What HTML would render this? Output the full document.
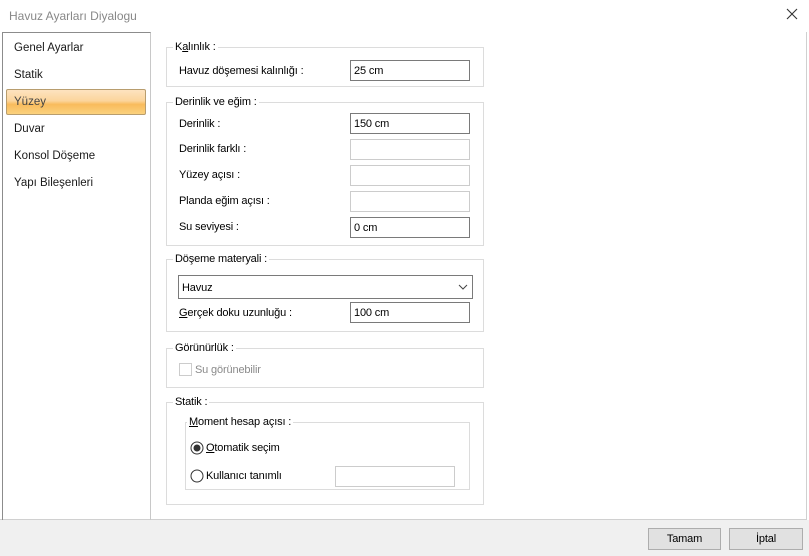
<!DOCTYPE html><html><head><meta charset="utf-8"><style>
*{margin:0;padding:0;box-sizing:border-box}
body{width:809px;height:556px;background:#fff;font-family:"Liberation Sans",sans-serif;font-size:11px;letter-spacing:-0.15px;color:#000;position:relative;overflow:hidden}
.a{position:absolute}
.t{position:absolute;white-space:nowrap;line-height:14px}
.g{position:absolute;border:1px solid #dcdcdc}
.lg{position:absolute;background:#fff;padding:0 2px;white-space:nowrap;line-height:14px}
.in{position:absolute;border:1px solid #7a7a7a;background:#fff;height:21px;padding:3px 0 0 3px;line-height:14px}
.dis{border-color:#cccccc}
.li{position:absolute;left:14px;font-size:11.5px;letter-spacing:0;color:#1a1a1a}
.btn{position:absolute;top:528px;height:22px;background:#e1e1e1;border:1px solid #adadad;text-align:center;line-height:20px}
</style></head><body>
<div class="t" style="left:9px;top:9px;font-size:12px;color:#888;letter-spacing:0">Havuz Ayarları Diyalogu</div>
<svg class="a" style="left:786px;top:8px" width="12" height="12"><path d="M1 1L11 11M11 1L1 11" stroke="#333" stroke-width="1.1"/></svg>
<div class="a" style="left:0;top:520px;width:809px;height:36px;background:#f0f0f0"></div>
<div class="a" style="left:0;top:519px;width:807px;height:1px;background:#d0d0d0"></div>
<div class="a" style="left:806px;top:32px;width:1px;height:488px;background:#d0d0d0"></div>
<div class="a" style="left:2px;top:32px;width:149px;height:488px;border:1px solid #8c8c8c;border-right-color:#c8c8c8;border-bottom:none"></div>
<div class="a" style="left:6px;top:89px;width:140px;height:26px;border:1px solid #b89d6e;border-radius:2px;background:linear-gradient(#fde3c0 0%,#fcd59c 45%,#f9bb5c 60%,#fbd27e 100%)"></div>
<div class="li t" style="top:41px">Genel Ayarlar</div>
<div class="li t" style="top:68px">Statik</div>
<div class="li t" style="top:95px;color:#444">Yüzey</div>
<div class="li t" style="top:122px">Duvar</div>
<div class="li t" style="top:149px">Konsol Döşeme</div>
<div class="li t" style="top:176px">Yapı Bileşenleri</div>

<div class="g" style="left:166px;top:47px;width:318px;height:40px"></div>
<div class="lg" style="left:173px;top:40px">K<u>a</u>lınlık :</div>
<div class="t" style="left:179px;top:64px">Havuz döşemesi kalınlığı :</div>
<div class="in" style="left:350px;top:60px;width:120px">25 cm</div>

<div class="g" style="left:166px;top:102px;width:318px;height:144px"></div>
<div class="lg" style="left:173px;top:95px">Derinlik ve eğim :</div>
<div class="t" style="left:179px;top:117px">Derinlik :</div>
<div class="t" style="left:179px;top:142px">Derinlik farklı :</div>
<div class="t" style="left:179px;top:168px">Yüzey açısı :</div>
<div class="t" style="left:179px;top:194px">Planda eğim açısı  :</div>
<div class="t" style="left:179px;top:220px">Su seviyesi :</div>
<div class="in" style="left:350px;top:113px;width:120px">150 cm</div>
<div class="in dis" style="left:350px;top:139px;width:120px"></div>
<div class="in dis" style="left:350px;top:165px;width:120px"></div>
<div class="in dis" style="left:350px;top:191px;width:120px"></div>
<div class="in" style="left:350px;top:217px;width:120px">0 cm</div>

<div class="g" style="left:166px;top:259px;width:318px;height:73px"></div>
<div class="lg" style="left:173px;top:252px">Döşeme materyali  :</div>
<div class="in" style="left:178px;top:275px;width:295px;height:24px;padding-top:5px">Havuz</div>
<svg class="a" style="left:458px;top:284px" width="10" height="6"><path d="M1 1L5 5L9 1" stroke="#444" fill="none"/></svg>
<div class="t" style="left:179px;top:306px"><u>G</u>erçek doku uzunluğu :</div>
<div class="in" style="left:350px;top:302px;width:120px">100 cm</div>

<div class="g" style="left:166px;top:348px;width:318px;height:40px"></div>
<div class="lg" style="left:173px;top:341px">Görünürlük :</div>
<div class="a" style="left:179px;top:363px;width:13px;height:13px;border:1px solid #ccc"></div>
<div class="t" style="left:195px;top:363px;color:#8a8a8a">Su görünebilir</div>

<div class="g" style="left:166px;top:402px;width:318px;height:103px"></div>
<div class="lg" style="left:173px;top:395px">Statik :</div>
<div class="g" style="left:185px;top:422px;width:285px;height:68px"></div>
<div class="lg" style="left:187px;top:415px"><u>M</u>oment hesap açısı :</div>
<svg class="a" style="left:190px;top:441px" width="14" height="14"><circle cx="7" cy="7" r="6" fill="#fff" stroke="#333"/><circle cx="7" cy="7" r="3.5" fill="#333"/></svg>
<div class="t" style="left:206px;top:441px"><u>O</u>tomatik seçim</div>
<svg class="a" style="left:190px;top:469px" width="14" height="14"><circle cx="7" cy="7" r="6" fill="#fff" stroke="#333"/></svg>
<div class="t" style="left:206px;top:469px">Kullanıcı tanımlı</div>
<div class="in dis" style="left:335px;top:466px;width:120px"></div>

<div class="btn" style="left:648px;width:73px">Tamam</div>
<div class="btn" style="left:729px;width:74px">İptal</div>
</body></html>
